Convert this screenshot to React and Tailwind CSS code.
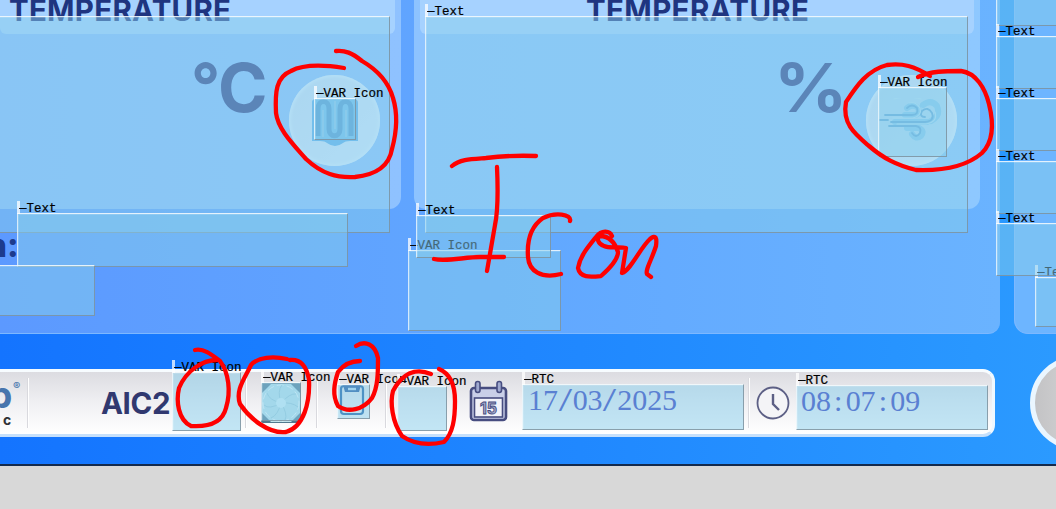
import React from "react";

const FRAME =
  "absolute bg-[#87ceeb]/50 border border-t-white/80 border-l-white/70 border-r-[#7c8f9b]/80 border-b-[#7c8f9b]/80 shadow-[inset_1px_1px_0_rgba(255,255,255,0.15)]";
const LABEL =
  "absolute whitespace-pre font-['Liberation_Mono',monospace] text-[12.5px] leading-[12px] font-medium text-black origin-left [-webkit-text-stroke:0.2px_black]";

/* Editor widget: translucent frame with a tag above its top-left corner. */
function Widget({ place, label, children }) {
  return (
    <div className={`${FRAME} ${place}`}>
      {label && (
        <>
          <span className="absolute -left-px -top-[13px] h-[13px] w-[3px] bg-white/75" />
          <span className={`${LABEL} left-[1px] -top-[11px]`}>
            <span className="mr-[-1px] inline-block w-[8.5px] overflow-hidden align-top">—</span>
            {label}
          </span>
        </>
      )}
      {children}
    </div>
  );
}

function Readout({ value, className }) {
  return (
    <div className={`flex font-['Liberation_Serif',serif] text-[30px] leading-[30px] text-[#5a80d2] ${className}`}>
      {value.split("").map((c, i) => (
        <span key={i} className={`w-[14.9px] text-center ${c === "/" ? "scale-x-[1.6] scale-y-110" : ""}`}>
          {c}
        </span>
      ))}
    </div>
  );
}

function Coil() {
  return (
    <svg className="h-[52px] w-[52px]" viewBox="0 0 52 52" fill="none">
      <path d="M3 7Q3 4 7 4H45Q49 4 49 8V46H41Q36 46 34 48Q26 54 18 48Q16 46 11 46H3Z" fill="#5eaeed" />
      <path d="M9 41V14C9 4 20 4 20 14V34C20 43 31 43 31 34V14C31 4 42 4 42 14V41" stroke="#1f67b5" strokeWidth="5" />
      <path d="M14 42V15M26 6V34M37 42V15" stroke="#9cc8e8" strokeWidth="1.5" />
    </svg>
  );
}

function Wind() {
  return (
    <svg className="h-[46px] w-[66px]" viewBox="0 0 66 46" fill="none" strokeLinecap="round">
      <path d="M26 17H34Q42 17 39 10Q34 5 28 10M44 7Q52 1 58 8Q62 18 52 23M16 24H48M28 30H40Q46 33 42 38Q37 42 33 36" stroke="#84c6f0" strokeWidth="6" />
      <path d="M6 17H33Q40 17 38 10Q33 5 28 10M1 22H9M12 24H46Q56 23 53 15Q49 8 43 13Q40 19 46 19M10 28H37Q43 29 41 35Q37 41 33 35" stroke="#4189c6" strokeWidth="1.8" />
      <path d="M14 20H34Q43 18 41 10Q37 3 30 5M18 26H47Q59 24 56 14" stroke="#e2f2fb" strokeWidth="1.2" />
      <path d="M15 1Q28 -3 42 1" stroke="#e2f2fb" strokeWidth="1.2" />
    </svg>
  );
}

function Fan() {
  return (
    <svg className="h-[40px] w-[40px]" viewBox="0 0 40 40" fill="none">
      <rect width="40" height="40" rx="2" fill="#52798e" />
      <path d="M10 1H30L39 10V30L30 39H10L1 30V10Z" fill="#bfe2ea" />
      <circle cx="20" cy="20" r="18" stroke="#f2fbfc" strokeDasharray="7 3" />
      <path d="M20 20Q16 8 21 2M20 20Q29 10 35 11M20 20Q31 19 37 24M20 20Q27 31 24 37M20 20Q17 32 10 35M20 20Q8 27 3 22M20 20Q8 17 6 10" stroke="#9fcbd8" />
      <circle cx="20" cy="20" r="5" fill="#d8f3f8" />
    </svg>
  );
}

function Scale() {
  return (
    <svg className="h-[32px] w-[26px]" viewBox="0 0 26 32" fill="none">
      <rect x="2" y="2" width="22" height="28" rx="3" stroke="#14569f" strokeWidth="2.2" />
      <path d="M4 1H22L20 8H6Z" fill="#1b4e98" />
      <path d="M9 5H17" stroke="#b7d7ef" strokeWidth="2.4" />
    </svg>
  );
}

function Calendar() {
  return (
    <svg className="h-[42px] w-[40px]" viewBox="0 0 40 42" fill="none" stroke="#474d80">
      <rect x="2" y="8" width="35" height="32" rx="3" strokeWidth="2.6" fill="#c9cfe8" />
      <rect x="5.5" y="18" width="28" height="19" fill="#f2f3fa" strokeWidth="1.6" />
      <rect x="6.5" y="1.5" width="4.5" height="11" rx="2.2" fill="#9fa9cf" strokeWidth="1.6" />
      <rect x="28" y="1.5" width="4.5" height="11" rx="2.2" fill="#9fa9cf" strokeWidth="1.6" />
      <text x="19.5" y="33.5" textAnchor="middle" fontFamily="Inter, sans-serif" fontWeight="700" fontSize="16" fill="#a3a9ca" strokeWidth="0.9">15</text>
    </svg>
  );
}

function Clock() {
  return (
    <svg className="h-[34px] w-[34px]" viewBox="0 0 34 34" fill="none" stroke="#5c5f85">
      <circle cx="17" cy="17" r="15.5" strokeWidth="1.8" fill="#f4f4f7" />
      <path d="M17 8V18L23 24" strokeWidth="2.4" />
    </svg>
  );
}

function Card({ unit, children, className, titleClass, unitClass, headClass }) {
  return (
    <section className={`flex h-[209px] shrink-0 flex-col bg-gradient-to-r ${className}`}>
      <header className={`h-[34px] shrink-0 rounded-b-[6px] bg-[#a6d2ff] ${headClass}`}>
        <h2 className={`-mt-[4px] whitespace-nowrap font-['Inter',sans-serif] text-[29.5px] leading-[29px] font-bold text-[#1f3580] ${titleClass}`}>
          TEMPERATURE
        </h2>
      </header>
      <div className="flex items-start">
        <div className={`mt-[20px] shrink-0 whitespace-nowrap font-['Inter',sans-serif] text-[67px] leading-[67px] font-bold text-[#2f3c85] ${unitClass}`}>
          {unit}
        </div>
        <div className="mt-[41px] flex h-[91px] w-[91px] shrink-0 items-center justify-center rounded-full bg-gradient-to-br from-[#cfdff5] to-[#d9ecff] shadow-[inset_0_0_3px_2px_#dff0ff]">
          {children}
        </div>
      </div>
    </section>
  );
}

const Divider = () => (
  <span className="h-[50px] w-[2px] shrink-0 border-l border-[#d9d9de] bg-white" />
);

export default function App() {
  return (
    <div className="relative flex h-[509px] w-[1056px] flex-col overflow-hidden bg-[#d8d8d8]">
      <main className="flex h-[466px] shrink-0 flex-col border-b-2 border-[#142a4c] bg-gradient-to-r from-[#1474ff] via-[#1f86ff] to-[#2b9aff]">
        <div className="flex h-[334px] shrink-0 gap-[14px]">
          <div className="flex w-[1000px] shrink-0 flex-col rounded-br-[12px] border-b border-[#7db8ff] bg-gradient-to-r from-[#5c99ff] via-[#61a7ff] to-[#6ab3ff]">
            <div className="flex gap-[13px]">
              <Card
                unit={<><span className="inline-block w-[27px] origin-top-left scale-95">°</span>C</>}
                className="w-[401px] rounded-br-[12px] from-[#8abdff] to-[#8fc2ff]"
                headClass="w-[395px] pl-[9px]"
                titleClass="tracking-[0.25px]"
                unitClass="w-[98px] ml-[191px]"
              >
                <Coil />
              </Card>
              <Card
                unit={<span className="inline-block origin-left scale-x-[1.08]">%</span>}
                className="w-[566px] rounded-b-[12px] from-[#8dc3ff] to-[#8ec8ff]"
                headClass="ml-[6px] w-[554px] pl-[166px]"
                titleClass="tracking-[0.35px]"
                unitClass="w-[92px] ml-[360px]"
              >
                <Wind />
              </Card>
            </div>
            <div className="-ml-[14px] mt-[20px] font-['Inter',sans-serif] text-[33px] leading-[33px] font-extrabold text-[#1d3b8d]">
              n:
            </div>
          </div>
          <aside className="w-[60px] shrink-0 rounded-bl-[14px] border-b border-l border-[#7db8ff] bg-[#6db5ff]" />
        </div>

        <footer className="mt-[35px] flex h-[68px] shrink-0 items-center">
          <div className="flex h-[68px] w-[995px] shrink-0 items-center rounded-r-[12px] border-y-[3px] border-r-[3px] border-t-[#f7fcff] border-r-[#eff8ff] border-b-[#c6e0fb] bg-gradient-to-b from-[#dcdce1] via-[#f0f0f3] to-white">
            <div className="relative flex h-full w-[27px] shrink-0 flex-col overflow-hidden font-['Inter',sans-serif] leading-none text-[#4775ad]">
              <span className="-ml-[11px] mt-[5px] text-[37px] leading-[36px] font-bold">p</span>
              <span className="ml-[3px] text-[14px] leading-[14px] font-bold text-[#303236]">c</span>
              <span className="absolute left-[13px] top-[9px] text-[11px] font-bold">®</span>
            </div>
            <Divider />
            <div className="ml-[72px] w-[144px] shrink-0 font-['Inter',sans-serif] text-[29.5px] leading-[30px] font-bold text-[#30386f]">
              <span className="tracking-[-0.4px]">AIC2</span>
            </div>
            <Divider />
            <div className="ml-[14px] mr-[15px] shrink-0"><Fan /></div>
            <Divider />
            <div className="ml-[21px] mr-[20px] shrink-0 -mt-[6px]"><Scale /></div>
            <Divider />
            <div className="ml-[82px] mr-[239px] shrink-0 -mt-[4px]"><Calendar /></div>
            <Divider />
            <div className="ml-[6px] shrink-0"><Clock /></div>
          </div>
          <div className="ml-[35px] h-[94px] w-[94px] shrink-0 rounded-full border-[5px] border-[#eaf6ff] bg-gradient-to-r from-[#c3c3c5] to-[#e2e2e2]" />
        </footer>
      </main>

      {/* Widgets placed freely on the screen background */}
      <Widget place="-left-[10px] top-[16px] h-[217px] w-[400px]" />
      <Widget place="left-[425px] top-[16px] h-[217px] w-[543px]" label="Text" />
      <Widget place="left-[17px] top-[213px] h-[54px] w-[331px]" label="Text" />
      <Widget place="-left-[10px] top-[265px] h-[51px] w-[105px]" />
      <Widget place="left-[408px] top-[250px] h-[81px] w-[153px]" label="VAR Icon" />
      <Widget place="left-[416px] top-[215px] h-[43px] w-[135px]" label="Text" />
      <Widget place="left-[1035px] top-[277px] h-[50px] w-[80px]" label="Text" />
      <Widget place="left-[996px] -top-[27px] h-[53px] w-[80px]" />
      <Widget place="left-[996px] top-[36px] h-[53px] w-[80px]" label="Text" />
      <Widget place="left-[996px] top-[98px] h-[53px] w-[80px]" label="Text" />
      <Widget place="left-[996px] top-[161px] h-[53px] w-[80px]" label="Text" />
      <Widget place="left-[996px] top-[223px] h-[53px] w-[80px]" label="Text" />
      <Widget place="left-[314px] top-[98px] h-[42px] w-[42px]" label="VAR Icon" />
      <Widget place="left-[878px] top-[87px] h-[70px] w-[69px]" label="VAR Icon" />
      <Widget place="left-[172px] top-[372px] h-[59px] w-[69px]" label="VAR Icon" />
      <Widget place="left-[261px] top-[382px] h-[39px] w-[40px]" label="VAR Icon" />
      <Widget place="left-[337px] top-[384px] h-[35px] w-[33px]" label="VAR Icon" />
      <Widget place="left-[397px] top-[386px] h-[45px] w-[50px]" label="VAR Icon" />
      <Widget place="left-[522px] top-[384px] h-[46px] w-[222px]" label="RTC">
        <Readout value="17/03/2025" className="pl-[5px]" />
      </Widget>
      <Widget place="left-[796px] top-[385px] h-[45px] w-[192px]" label="RTC">
        <Readout value="08:07:09" className="pl-[4px]" />
      </Widget>

      {/* Red pen annotations */}
      <svg className="pointer-events-none absolute inset-0" width="1056" height="509" viewBox="0 0 1056 509" fill="none" stroke="#ff0000" strokeWidth="4.3" strokeLinecap="round" strokeLinejoin="round">
        <path d="M344 68C325 65 304 64 291 71C276 77 275 92 276 113C278 129 292 143 306 159C322 174 337 178 355 177C374 175 389 167 392 149C398 127 397 111 393 98C388 80 374 68 362 61C352 53 345 50 336 51" />
        <path d="M918 77C931 71 945 71 961 71C976 73 985 88 989 104C994 124 993 142 982 153C967 166 943 171 916 170C896 165 883 158 869 146C855 134 842 124 846 102C856 87 867 70 887 65C903 63 914 66 930 76" />
        <path d="M452 166C460 159 472 159 486 158Q510 155 536 156M497 167C498 189 498 211 495 225L487 271M434 259C446 262 465 257 480 257L504 257" />
        <path d="M570 221C572 214 555 212 543 218C530 227 527 243 528 257C529 271 541 279 561 274" />
        <path d="M612 236C610 231 602 229 596 237C588 247 580 256 578 268C580 278 590 277 601 276C609 269 618 260 618 252C615 243 609 236 600 236C596 238 598 244 604 246C611 249 619 246 626 248L622 273C631 270 640 248 650 239C656 234 657 238 656 246C652 259 645 270 647 274L651 277" />
        <path d="M195 350C203 348 211 354 220 361C229 373 231 392 226 408C222 424 207 427 191 426C178 420 176 401 179 388C186 371 202 360 217 360" />
        <path d="M287 359C273 356 258 357 251 365C245 378 235 390 240 404C250 419 269 434 286 432C304 427 310 402 309 380C307 368 302 359 290 360" />
        <path d="M356 346C365 340 375 344 378 358C378 373 378 387 372 398C363 410 348 413 338 406C332 395 334 384 338 372C344 364 351 361 360 361" />
        <path d="M439 369C451 374 455 385 455 401C455 419 453 433 444 442C431 445 415 445 402 436C392 422 390 402 393 391C402 374 415 367 431 374" />
      </svg>
    </div>
  );
}
